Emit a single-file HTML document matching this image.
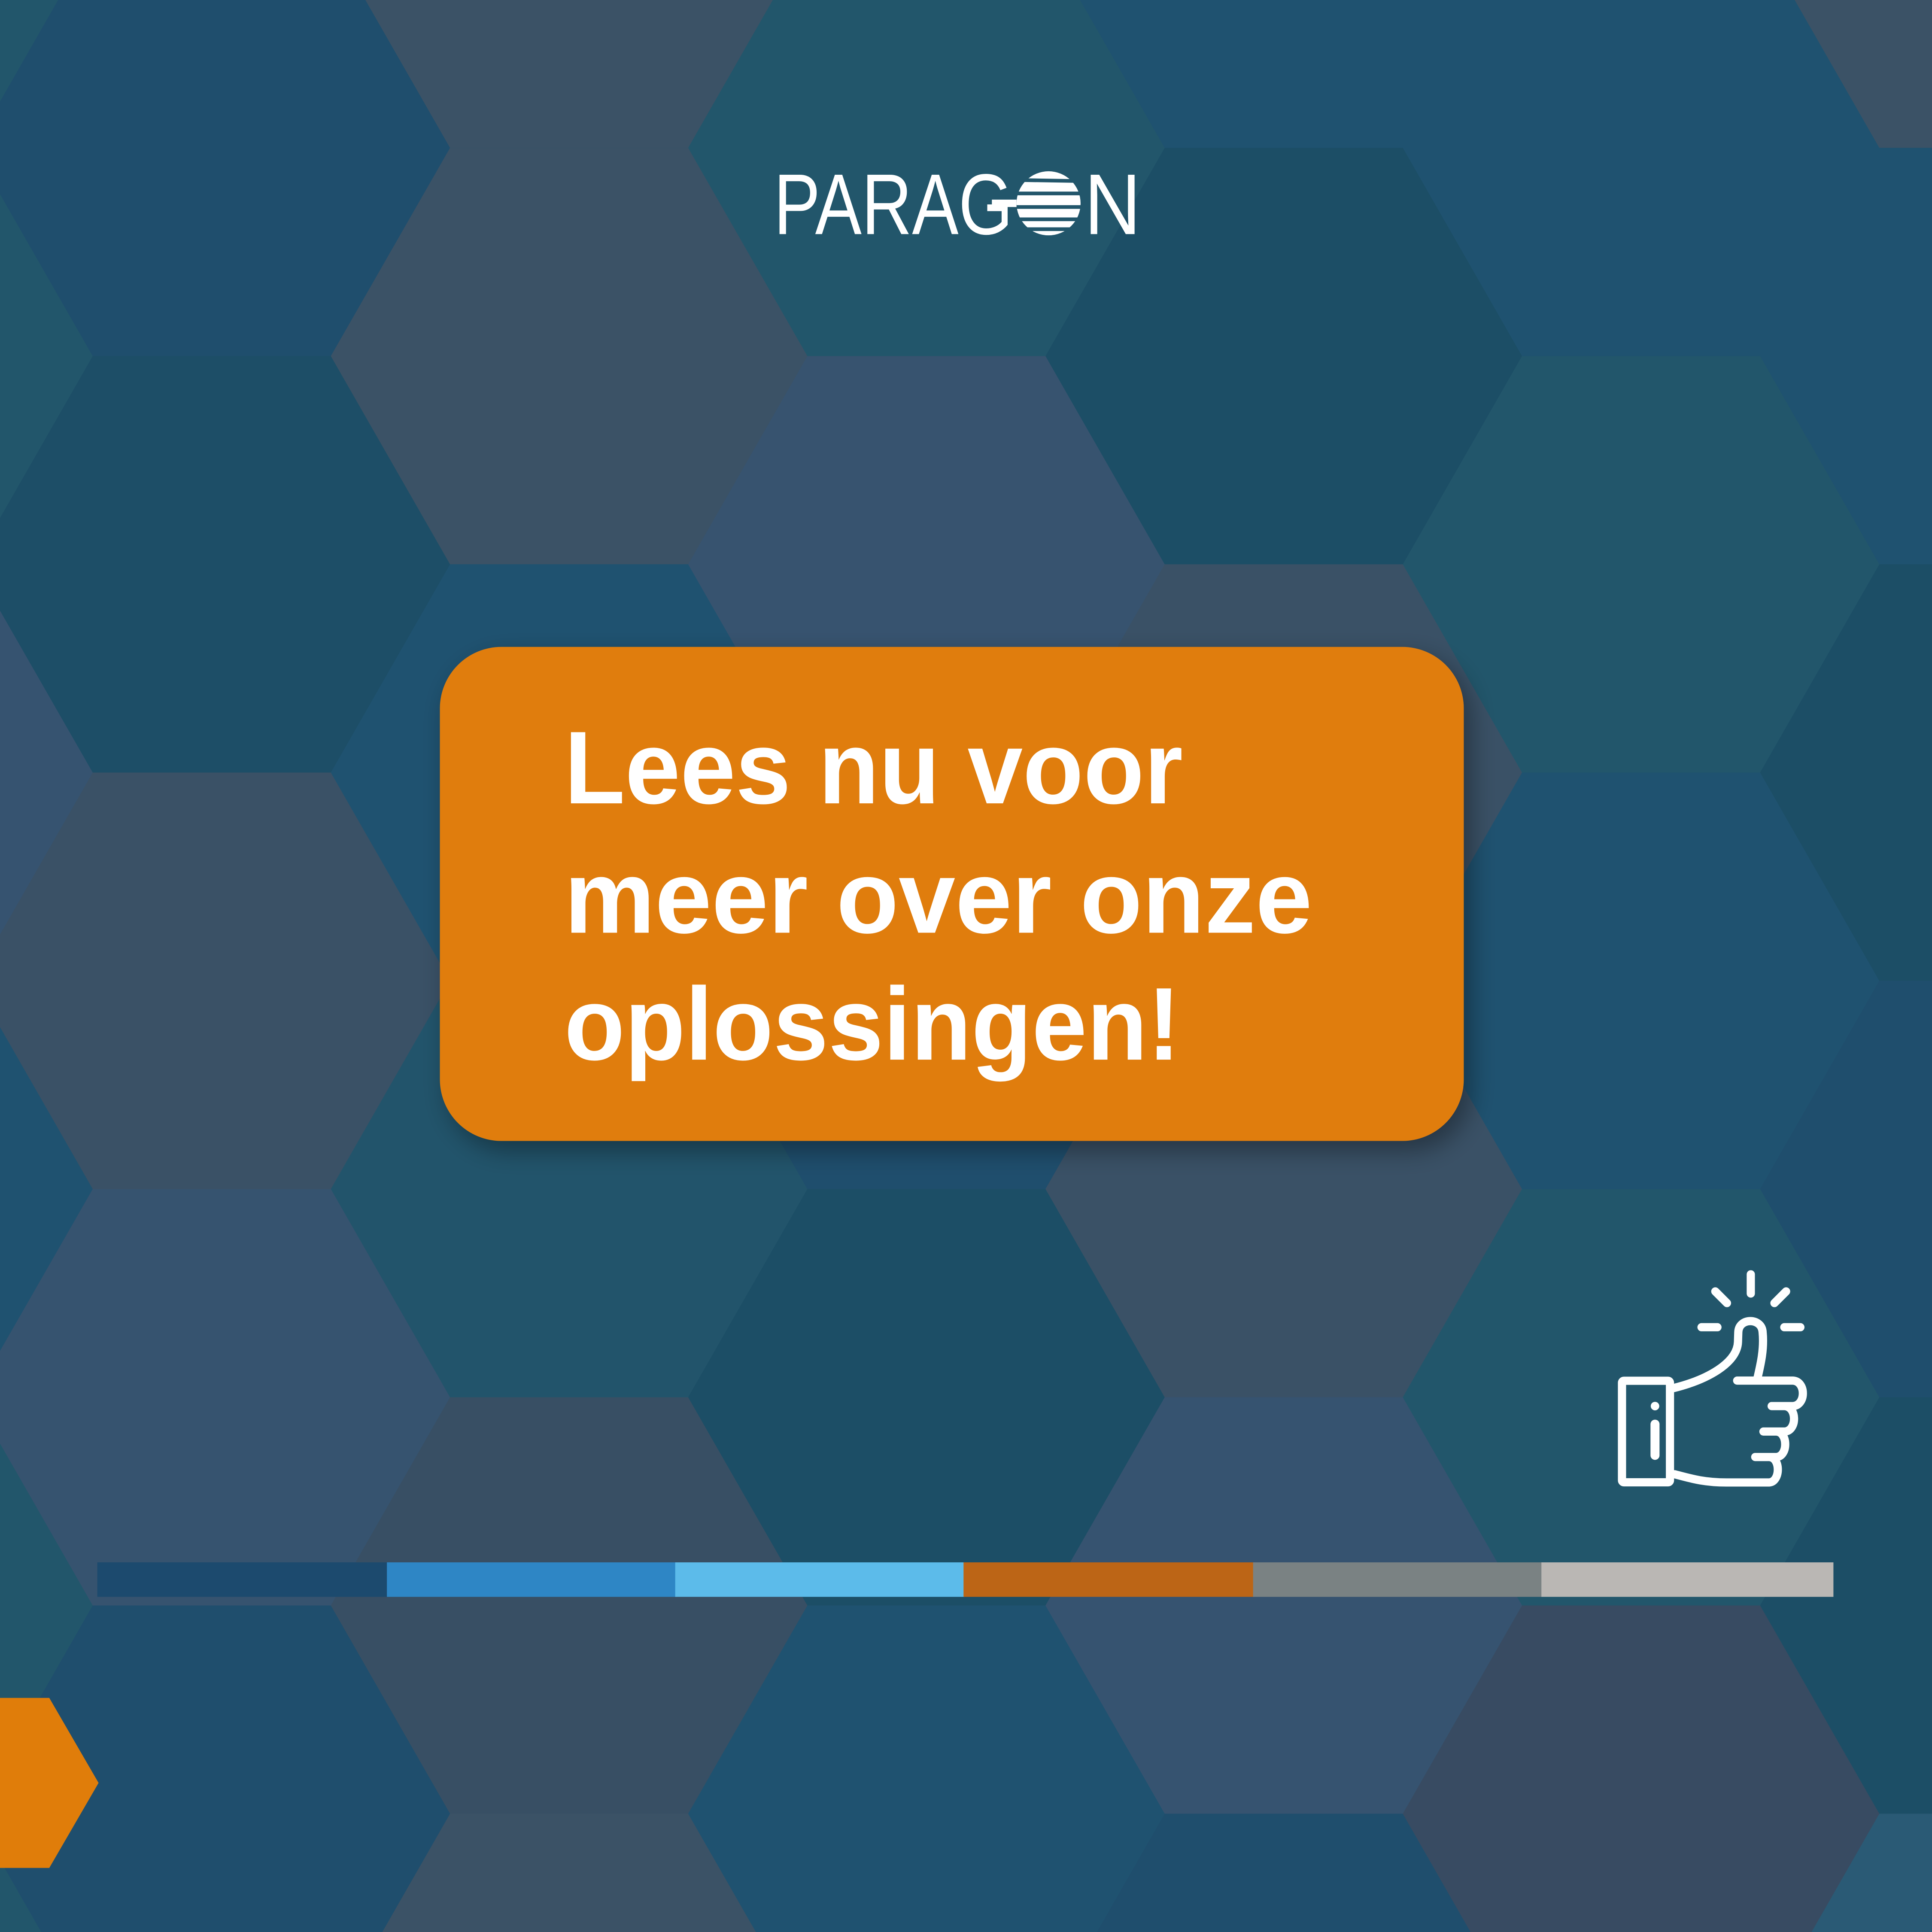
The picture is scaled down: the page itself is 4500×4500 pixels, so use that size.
<!DOCTYPE html>
<html><head><meta charset="utf-8"><style>html,body{margin:0;padding:0;background:#1f4e6d;width:4500px;height:4500px;overflow:hidden}svg{display:block}</style></head>
<body>
<svg width="4500" height="4500" viewBox="0 0 1568 1568" xmlns="http://www.w3.org/2000/svg">
<defs>
<polygon id="h" points="-193.5,0 -96.75,-169 96.75,-169 193.5,0 96.75,169 -96.75,169"/>
<filter id="sh" x="-10%" y="-10%" width="125%" height="130%"><feDropShadow dx="6" dy="8" stdDeviation="10" flood-color="#000" flood-opacity="0.35"/></filter>
</defs>
<rect width="1568" height="1568" fill="#1f4e6d"/>
<use href="#h" x="-118" y="-49" fill="#22566b"/>
<use href="#h" x="-118" y="289" fill="#22566b"/>
<use href="#h" x="-118" y="627" fill="#365370"/>
<use href="#h" x="-118" y="965" fill="#1f5270"/>
<use href="#h" x="-118" y="1303" fill="#22566b"/>
<use href="#h" x="-118" y="1641" fill="#22566b"/>
<use href="#h" x="172" y="120" fill="#1f4e6d"/>
<use href="#h" x="172" y="458" fill="#1d4e67"/>
<use href="#h" x="172" y="796" fill="#3a5166"/>
<use href="#h" x="172" y="1134" fill="#36536f"/>
<use href="#h" x="172" y="1472" fill="#1f4e6d"/>
<use href="#h" x="462" y="-49" fill="#3b5266"/>
<use href="#h" x="462" y="289" fill="#3b5266"/>
<use href="#h" x="462" y="627" fill="#1f5270"/>
<use href="#h" x="462" y="965" fill="#22546b"/>
<use href="#h" x="462" y="1303" fill="#384f64"/>
<use href="#h" x="462" y="1641" fill="#3b5266"/>
<use href="#h" x="752" y="120" fill="#22566b"/>
<use href="#h" x="752" y="458" fill="#37536f"/>
<use href="#h" x="752" y="796" fill="#1f4e6d"/>
<use href="#h" x="752" y="1134" fill="#1c4e66"/>
<use href="#h" x="752" y="1472" fill="#1f5270"/>
<use href="#h" x="1042" y="-49" fill="#1f5270"/>
<use href="#h" x="1042" y="289" fill="#1c4e66"/>
<use href="#h" x="1042" y="627" fill="#3a5166"/>
<use href="#h" x="1042" y="965" fill="#3a5166"/>
<use href="#h" x="1042" y="1303" fill="#365370"/>
<use href="#h" x="1042" y="1641" fill="#1f4e6d"/>
<use href="#h" x="1332" y="120" fill="#1f5270"/>
<use href="#h" x="1332" y="458" fill="#22566b"/>
<use href="#h" x="1332" y="796" fill="#1f5270"/>
<use href="#h" x="1332" y="1134" fill="#22566b"/>
<use href="#h" x="1332" y="1472" fill="#384b62"/>
<use href="#h" x="1622" y="-49" fill="#3b5266"/>
<use href="#h" x="1622" y="289" fill="#1f5270"/>
<use href="#h" x="1622" y="627" fill="#1c4e66"/>
<use href="#h" x="1622" y="965" fill="#1f4e6d"/>
<use href="#h" x="1622" y="1303" fill="#1c4e66"/>
<use href="#h" x="1622" y="1641" fill="#2a5a75"/>

<g fill="#fff">
<text x="628" y="190" font-family="Liberation Sans, sans-serif" font-size="70" textLength="194" lengthAdjust="spacingAndGlyphs">PARAG</text>
<text x="880" y="190" font-family="Liberation Sans, sans-serif" font-size="70" textLength="46" lengthAdjust="spacingAndGlyphs">N</text>
<circle cx="851" cy="165" r="26"/>
</g>
<g stroke="#22566b" stroke-width="3">
<line x1="820" y1="146" x2="880" y2="147"/>
<line x1="820" y1="157" x2="880" y2="157"/>
<line x1="820" y1="168" x2="880" y2="168"/>
<line x1="820" y1="178" x2="880" y2="178"/>
<line x1="820" y1="186" x2="880" y2="186"/>
</g>
<rect x="805" y="162" width="20" height="6" fill="#fff"/>

<rect x="357" y="525" width="831" height="401" rx="50" fill="#e07d0a" filter="url(#sh)"/>
<g fill="#fff" font-family="Liberation Sans, sans-serif" font-weight="bold" font-size="84">
<text x="458" y="652" textLength="502" lengthAdjust="spacingAndGlyphs">Lees nu voor</text>
<text x="458" y="757" textLength="607" lengthAdjust="spacingAndGlyphs">meer over onze</text>
<text x="458" y="860" textLength="500" lengthAdjust="spacingAndGlyphs">oplossingen!</text>
</g>

<g transform="translate(1289.2,1010.5) scale(0.13333)" fill="none" stroke="#fff" stroke-width="50" stroke-linecap="round" stroke-linejoin="round">
<line x1="988" y1="178" x2="988" y2="295"/>
<line x1="772" y1="282" x2="843" y2="353"/>
<line x1="1203" y1="282" x2="1132" y2="353"/>
<line x1="688" y1="500" x2="785" y2="500"/>
<line x1="1192" y1="500" x2="1290" y2="500"/>
<rect x="204" y="826" width="292" height="618" rx="12"/>
<circle cx="405" cy="980" r="26" fill="#fff" stroke="none"/>
<line x1="405" y1="1090" x2="405" y2="1280" stroke-width="55"/>
<path d="M520,870 C720,820 905,720 910,590 L912,530 C915,440 1055,440 1060,530 C1070,630 1050,720 1025,825 M905,825 L1245,825 C1325,830 1325,975 1245,980 L1115,980 M1115,980 L1195,980 C1270,985 1270,1130 1195,1135 L1065,1135 M1065,1135 L1145,1135 C1215,1140 1215,1285 1145,1290 L1015,1290 M1015,1290 L1100,1290 C1170,1292 1170,1440 1100,1445 L840,1445 C700,1445 620,1420 525,1395"/>
</g>

<rect x="79" y="1268" width="236" height="28" fill="#1c4a6e"/>
<rect x="314" y="1268" width="235" height="28" fill="#2e86c5"/>
<rect x="548" y="1268" width="235" height="28" fill="#5cbbea"/>
<rect x="782" y="1268" width="236" height="28" fill="#bc6516"/>
<rect x="1017" y="1268" width="235" height="28" fill="#7a8283"/>
<rect x="1251" y="1268" width="237" height="28" fill="#bab7b4"/>

<polygon points="0,1378 40,1378 80,1447 40,1516 0,1516" fill="#e07d0a"/>
</svg>
</body></html>
